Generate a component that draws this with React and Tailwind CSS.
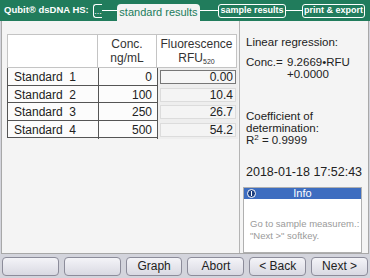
import React from "react";

const rows = [
  { name: "Standard  1", conc: "0", rfu: "0.00", active: true },
  { name: "Standard  2", conc: "100", rfu: "10.4" },
  { name: "Standard  3", conc: "250", rfu: "26.7" },
  { name: "Standard  4", conc: "500", rfu: "54.2" },
];

const softkeys = ["", "", "Graph", "Abort", "< Back", "Next >"];

// Step tabs across the top bar
const Header = () => (
  <div className="flex h-[21px] items-end bg-[#217c5c] pl-[4px] text-white">
    <div className="flex h-full w-[86px] items-center text-[9.5px] font-bold whitespace-nowrap">
      Qubit® dsDNA HS:
    </div>
    <div className="ml-[3px] mb-[3px] flex h-[14px] w-[9px] items-center justify-center rounded-l-[3px] border border-r-0 border-white text-[9px] leading-none">
      ...
    </div>
    <div className="mb-[10px] h-px w-[15px] bg-white" />
    <div className="flex h-[17px] w-[83px] items-center justify-center rounded-t-[4px] bg-[#f4f4f4] text-[11px] text-[#217c5c] whitespace-nowrap">
      standard results
    </div>
    <div className="mb-[10px] h-px w-[18px] bg-white" />
    <div className="mb-[3px] flex h-[14px] w-[68px] items-center justify-center rounded-[3px] border border-white text-[9px] font-bold whitespace-nowrap">
      sample results
    </div>
    <div className="mb-[10px] h-px w-[16px] bg-white" />
    <div className="mb-[3px] flex h-[14px] w-[63px] items-center justify-center rounded-[3px] border border-white text-[9px] font-bold whitespace-nowrap">
      print &amp; export
    </div>
  </div>
);

const Table = () => (
  <div className="w-[230px] text-[12px] text-[#222]">
    <div className="grid h-[34px] grid-cols-[91px_59px_80px] bg-white">
      <div className="border border-[#c4c4c4]" />
      <div className="flex flex-col items-center justify-center border-y border-r border-[#c4c4c4] leading-[14px] text-[#333]">
        <span>Conc.</span>
        <span>ng/mL</span>
      </div>
      <div className="flex flex-col items-center justify-center border-y border-r border-[#c4c4c4] leading-[14px] text-[#333]">
        <span>Fluorescence</span>
        <span>
          RFU<sub className="text-[7px]">520</sub>
        </span>
      </div>
    </div>
    {rows.map((r) => (
      <div
        key={r.name}
        className="grid h-[17.5px] grid-cols-[91px_59px_80px] border-x border-b border-[#555] bg-[#fcfcfc] first:border-t"
      >
        <div className="flex items-center border-r border-[#555] pl-[6px] whitespace-pre">
          {r.name}
        </div>
        <div className="flex items-center justify-end border-r border-[#555] pr-[5px]">
          {r.conc}
        </div>
        <div className="flex items-center bg-[#eeeeee] px-[2px]">
          <div
            className={
              r.active
                ? "flex h-[14px] w-full items-center justify-end border border-[#777] bg-[#f6f6f6] pr-[2px]"
                : "flex h-[14px] w-full items-center justify-end border border-[#dcdcdc] bg-[#f4f4f4] pr-[2px]"
            }
          >
            {r.rfu}
          </div>
        </div>
      </div>
    ))}
  </div>
);

const InfoBox = () => (
  <div className="mt-[8px] ml-[-3px] mr-[6px] flex h-[67px] flex-col border border-[#b0b0b0] bg-white">
    <div className="relative flex h-[11px] items-center justify-center bg-[#3d6dc0] text-[11px] leading-none text-white">
      <svg
        className="absolute left-[3px] top-[1px]"
        width="9"
        height="9"
        viewBox="0 0 9 9"
      >
        <circle cx="4.5" cy="4.5" r="4" fill="#1c3f80" stroke="#fff" strokeWidth="1" />
        <rect x="4" y="2" width="1" height="5" fill="#fff" />
      </svg>
      Info
    </div>
    <div className="pl-[6px] pt-[19px] text-[9.5px] leading-[11.5px] text-[#9a9a9a] whitespace-nowrap">
      <div>Go to sample measurem.:</div>
      <div>"Next &gt;" softkey.</div>
    </div>
  </div>
);

export default function App() {
  return (
    <div className="flex h-[278px] w-[370px] flex-col bg-[#d3d4dc] font-['Liberation_Sans',Arial,sans-serif]">
      <Header />
      <div className="mx-[1px] flex h-[233px] border-x border-b border-[#a8a8a8] bg-[#f4f4f4]">
        <div className="w-[238px] border-r border-[#b4b4b4] pl-[5px] pt-[13px]">
          <Table />
        </div>
        <div className="flex flex-1 flex-col pl-[6px] pt-[15px] text-[11.5px] leading-[12px] text-[#222]">
          <div>Linear regression:</div>
          <div className="mt-[8px] flex">
            <span className="w-[41px]">Conc.=</span>
            <div>
              <div>9.2669•RFU</div>
              <div>+0.0000</div>
            </div>
          </div>
          <div className="mt-[30px]">Coefficient of</div>
          <div>determination:</div>
          <div>
            R<sup className="text-[8px]">2</sup> = 0.9999
          </div>
          <div className="mt-[20px] text-[12.5px] leading-[13px]">2018-01-18 17:52:43</div>
          <InfoBox />
        </div>
      </div>
      <div className="flex flex-1 items-center gap-[5px] px-[2px]">
        {softkeys.map((k, i) => (
          <button
            key={i}
            className="h-[19px] w-[57px] rounded-[4px] border border-[#8c8c9a] bg-gradient-to-b from-[#f4f4f8] to-[#d9d9e2] text-[12px] leading-none text-[#222]"
          >
            {k}
          </button>
        ))}
      </div>
    </div>
  );
}
